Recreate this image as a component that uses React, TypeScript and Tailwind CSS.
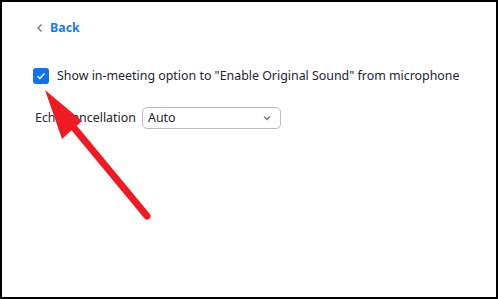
import React from 'react';

const font = { fontFamily: '"Noto Sans", "Open Sans", sans-serif' };

export default function App() {
    return (
        <div
            className="relative w-[498px] h-[299px] border-2 border-black bg-white text-[12.4px] text-[#232333] overflow-hidden"
            style={font}
        >
            <div className="flex flex-col pl-[31px] pt-[16px]">
                {/* Back link */}
                <div className="flex items-center gap-[6px] h-[20px]">
                    <svg className="w-[8px] h-[10px] ml-[3px]" viewBox="0 0 8 10" fill="none">
                        <path d="M5.5 1.5L2 5l3.5 3.5" stroke="#6e6e7e" strokeWidth={1.3} />
                    </svg>
                    <span className="font-bold text-[#1a7cf0] leading-none">Back</span>
                </div>

                {/* Original sound option */}
                <div className="flex items-center gap-[8px] mt-[29px] h-[18px]">
                    <div className="w-[16px] h-[16px] rounded-[3px] bg-[#0e72ed] flex items-center justify-center">
                        <svg className="w-[10px] h-[10px]" viewBox="0 0 10 10" fill="none">
                            <path d="M1.5 5.2l2.3 2.2L8.5 2.6" stroke="white" strokeWidth={1.4} />
                        </svg>
                    </div>
                    <span className="leading-none whitespace-nowrap">Show in-meeting option to "Enable Original Sound" from microphone</span>
                </div>

                {/* Echo cancellation */}
                <div className="flex items-center mt-[22px] h-[22px]">
                    <span className="w-[109px] pl-[2px] whitespace-nowrap">Echo cancellation</span>
                    <div className="w-[139px] h-[22px] rounded-[5px] border border-[#babacc] flex items-center justify-between pl-[5px] pr-[9px]">
                        <span>Auto</span>
                        <svg className="w-[8px] h-[6px]" viewBox="0 0 8 6" fill="none">
                            <path d="M1 1.5l3 3 3-3" stroke="#6e6e7e" strokeWidth={1.3} />
                        </svg>
                    </div>
                </div>
            </div>

            {/* Annotation arrow */}
            <svg className="absolute left-0 top-0 pointer-events-none" width={498} height={299} viewBox="0 0 498 299">
                <line x1={145} y1={214} x2={68} y2={121} stroke="#ed1c24" strokeWidth={7} strokeLinecap="round" />
                <polygon points="43,88 60,137 80,119" fill="#ed1c24" />
            </svg>
        </div>
    );
}
